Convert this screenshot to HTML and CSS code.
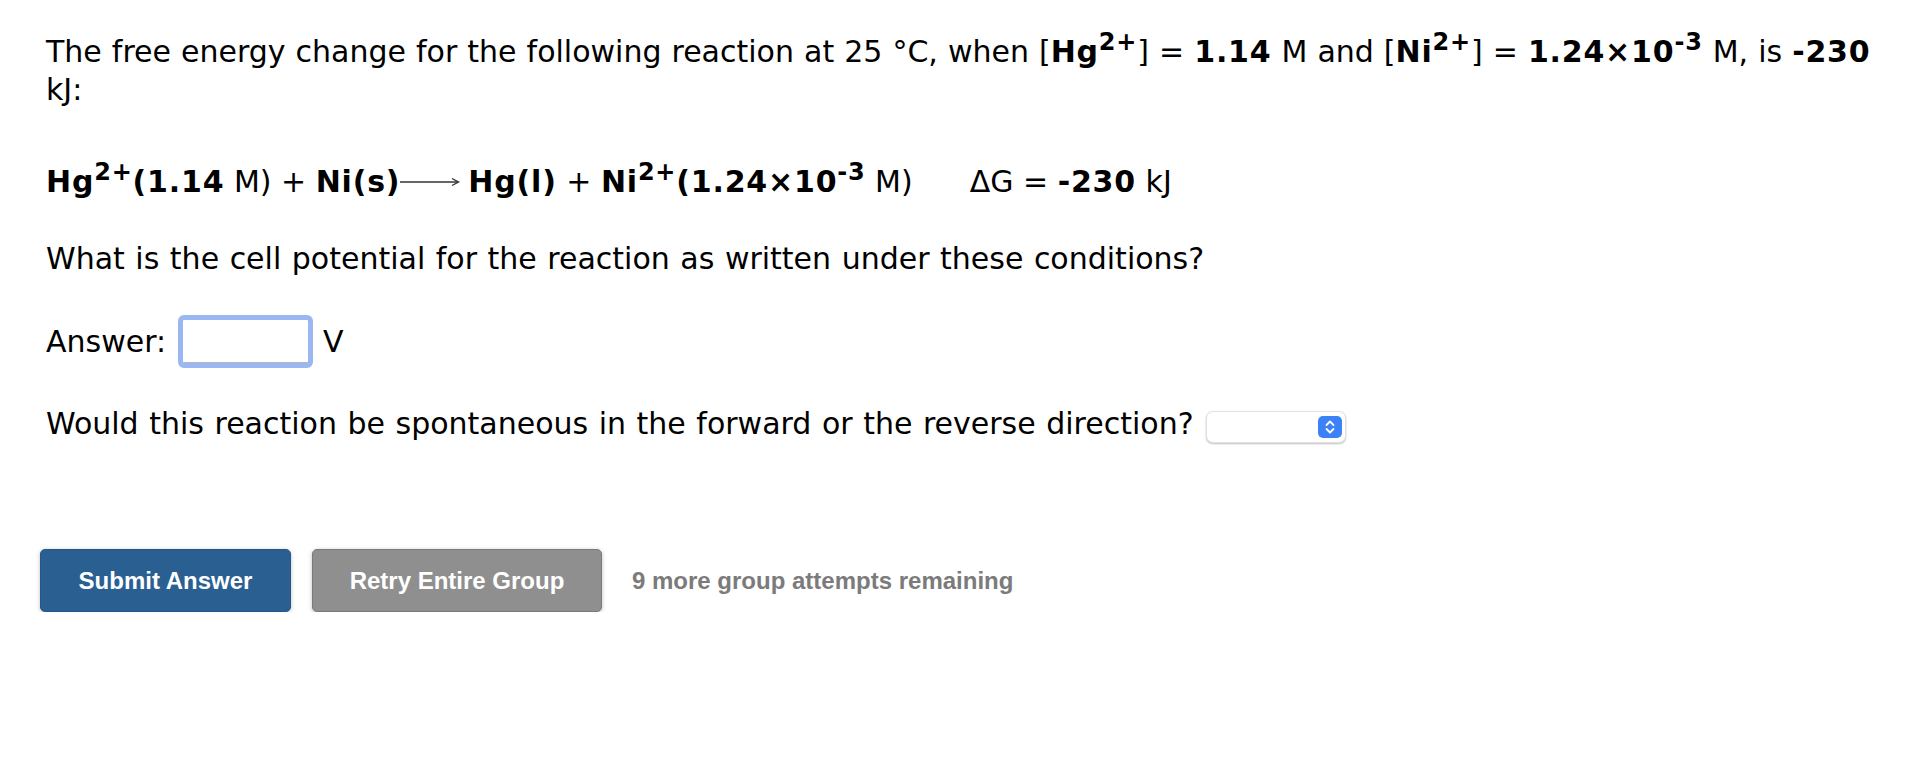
FILE: index.html
```html
<!DOCTYPE html>
<html lang="en">
<head>
<meta charset="utf-8">
<title>Cell potential question</title>
<link rel="stylesheet" href="styles.css">
</head>
<body>
<main class="question">
  <p class="intro">The free energy change for the following reaction at 25 °C, when [<b>Hg<sup>2+</sup></b>] = <b>1.14</b> M and [<b>Ni<sup>2+</sup></b>] = <b>1.24×10<sup>-3</sup></b> M, is <b>-230</b> kJ:</p>

  <p class="reaction"><b>Hg<sup>2+</sup>(1.14</b> M) + <b>Ni(s)</b><svg class="arrow" width="60" height="12" viewBox="0 0 60 12" aria-hidden="true"><line x1="0" y1="6" x2="58" y2="6" stroke="#333" stroke-width="1.6"/><path d="M52 2.5 L58.5 6 L52 9.5" fill="none" stroke="#333" stroke-width="1.4"/></svg><b>Hg(l)</b> + <b>Ni<sup>2+</sup>(1.24×10<sup>-3</sup></b> M)<span class="dg">ΔG = <b>-230</b> kJ</span></p>

  <p class="ask">What is the cell potential for the reaction as written under these conditions?</p>

  <div class="answer-row">
    <label class="label" for="ans">Answer:</label>
    <input id="ans" class="answer-input" type="text">
    <span class="unit">V</span>
  </div>

  <div class="direction-row">
    <span class="label">Would this reaction be spontaneous in the forward or the reverse direction?</span>
    <span class="select">
      <span class="select-btn">
        <svg width="12" height="16" viewBox="0 0 12 16" aria-hidden="true"><path d="M2.5 6 L6 2.5 L9.5 6" fill="none" stroke="#fff" stroke-width="1.8" stroke-linecap="round" stroke-linejoin="round"/><path d="M2.5 10 L6 13.5 L9.5 10" fill="none" stroke="#fff" stroke-width="1.8" stroke-linecap="round" stroke-linejoin="round"/></svg>
      </span>
    </span>
  </div>

  <div class="actions">
    <button class="btn btn-submit" type="button">Submit Answer</button>
    <button class="btn btn-retry" type="button">Retry Entire Group</button>
    <span class="attempts">9 more group attempts remaining</span>
  </div>
</main>
</body>
</html>
```

FILE: styles.css
```css
html, body {
  margin: 0;
  padding: 0;
  background: #ffffff;
}

body {
  font-family: "DejaVu Sans", Verdana, sans-serif;
  font-size: 30px;
  line-height: 38px;
  color: #000000;
}

.question {
  padding: 33px 0 0 46px;
  box-sizing: border-box;
  width: 1896px;
}

p {
  margin: 0;
}

b {
  letter-spacing: 0.8px;
}

sup {
  font-size: 0.8em;
  line-height: 0;
  vertical-align: 0.5em;
}

.intro {
  word-spacing: 0.5px;
}

.reaction {
  margin-top: 54px;
}

.arrow {
  vertical-align: 4px;
  margin-right: 8px;
}

.dg {
  margin-left: 57px;
}

.ask {
  margin-top: 39px;
  word-spacing: 1px;
}

.answer-row {
  display: flex;
  align-items: center;
  margin-top: 37px;
}

.answer-input {
  box-sizing: border-box;
  width: 135px;
  height: 53px;
  margin: 0 10px 0 12px;
  border: 5px solid #9ab7f2;
  border-radius: 6px;
  box-shadow: inset 0 -1px 0 #b5b5b5;
  background: #ffffff;
  outline: none;
  padding: 0;
  font: inherit;
}

.unit {
  line-height: 38px;
}

.direction-row {
  display: flex;
  align-items: center;
  margin-top: 37px;
  word-spacing: 1px;
}

.select {
  box-sizing: border-box;
  width: 140px;
  height: 32px;
  margin-left: 12px;
  margin-top: 6px;
  border: 1px solid #e2e2e2;
  border-radius: 7px;
  background: #ffffff;
  box-shadow: 0 1px 2px rgba(0, 0, 0, 0.25);
  display: flex;
  align-items: center;
  justify-content: flex-end;
  padding-right: 3px;
}

.select-btn {
  width: 24px;
  height: 22px;
  border-radius: 5px;
  background: #3c82f6;
  display: flex;
  align-items: center;
  justify-content: center;
}

.actions {
  display: flex;
  align-items: center;
  margin-top: 106px;
  margin-left: -6px;
}

.btn {
  box-sizing: border-box;
  height: 63px;
  padding: 0;
  border-radius: 5px;
  font-family: "Liberation Sans", Arial, sans-serif;
  font-weight: bold;
  font-size: 24px;
  white-space: nowrap;
  text-align: center;
  color: #ffffff;
  cursor: pointer;
  box-shadow: 0 1px 4px rgba(0, 0, 0, 0.25);
}

.btn-submit {
  width: 251px;
  background: #2a5f92;
  border: 1px solid #26578a;
}

.btn-retry {
  width: 290px;
  margin-left: 21px;
  background: #8f8f8f;
  border: 1px solid #7a7a7a;
}

.attempts {
  margin-left: 30px;
  font-family: "Liberation Sans", Arial, sans-serif;
  font-weight: bold;
  font-size: 24px;
  color: #7b7b7b;
}
```
